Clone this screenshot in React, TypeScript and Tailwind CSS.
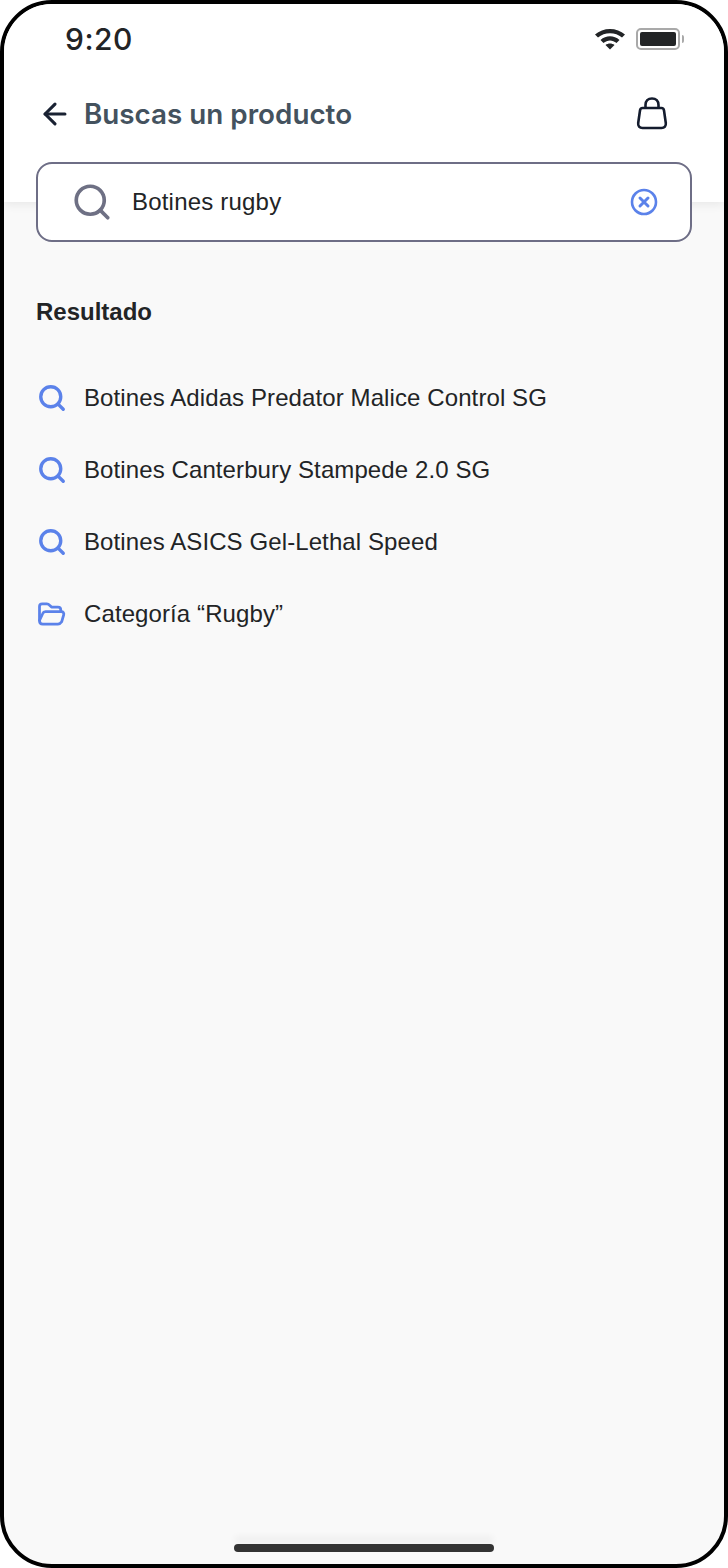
import React from 'react';
import { ArrowLeft, Search } from 'lucide-react';

const results = [
  'Botines Adidas Predator Malice Control SG',
  'Botines Canterbury Stampede 2.0 SG',
  'Botines ASICS Gel-Lethal Speed',
];

function FolderIcon() {
  return (
    <svg width="29" height="24" viewBox="0 0 30 26" fill="none" stroke="#5b82ea" strokeWidth="3" strokeLinejoin="round" strokeLinecap="round">
      <path d="M2 20 V5 C2 3 3 2 5 2 H10 C11.5 2 12.5 3 13.5 4 L15 5.5 H22 C24 5.5 25 6.5 25 8.5 V10" />
      <path d="M2 20 C2 22.5 3.5 24 5.5 24 H22 C24 24 25 23 26 21.5 L28.2 14 C28.8 12 27.5 10.5 25.8 10.5 H8.5 C7 10.5 6 11.2 5.5 12.5 Z" />
    </svg>
  );
}

function ResultRow({ label, folder }: { label: string; folder?: boolean }) {
  return (
    <div className="flex h-[72px] items-center">
      <div className="flex w-[48px] shrink-0 items-center">
        {folder ? (
          <div className="ml-[1px]">
            <FolderIcon />
          </div>
        ) : (
          <Search size={30} strokeWidth={2.7} className="ml-[1px] text-[#5b82ea]" />
        )}
      </div>
      <span className="text-[24px] leading-[32px] tracking-[0.1px] text-[#222426]">{label}</span>
    </div>
  );
}

export default function App() {
  return (
    <div className="bg-white font-['Liberation_Sans',Arial,sans-serif]">
      <div className="flex h-[1568px] w-[728px] flex-col overflow-hidden rounded-[52px] border-4 border-black bg-[#f9f9f9]">
        {/* Header */}
        <div className="h-[198px] shrink-0 bg-white shadow-[0_2px_10px_rgba(0,0,0,0.08)]">
          <div className="flex h-[80px] items-start justify-between pl-[61px] pr-[44px] pt-[16px]">
            <span className="font-['Inter',sans-serif] text-[30px] font-medium leading-[38px] tracking-[0.5px] text-[#222426]">9:20</span>
            <div className="flex items-center gap-[10px] pt-[7px]">
              <svg width="32" height="24" viewBox="0 0 32 24" fill="#222426" className="-mt-[1px]">
                <path d="M1 8.5 C9 1 23 1 31 8.5 L28 11.5 C21.5 5.8 10.5 5.8 4 11.5 Z" />
                <path d="M6.5 14 C12 9 20 9 25.5 14 L22.5 17 C18.5 13.6 13.5 13.6 9.5 17 Z" />
                <path d="M11.5 19 C14 17 18 17 20.5 19 L16 23.5 Z" />
              </svg>
              <div className="relative flex h-[22px] w-[44px] items-center rounded-[5px] border-2 border-[#a9a9a9] p-[2px]">
                <div className="h-full w-full rounded-[2px] bg-[#222426]" />
                <div className="absolute right-[-6px] top-[5px] h-[8px] w-[2px] rounded-r-sm bg-[#a9a9a9]" />
              </div>
            </div>
          </div>
          <div className="flex h-[60px] items-center justify-between pl-[34px] pr-[56px]">
            <div className="flex items-center gap-[12px]">
              <ArrowLeft size={34} strokeWidth={2.2} className="text-[#1a2233]" />
              <span className="font-['Inter',sans-serif] text-[27.8px] font-semibold leading-[36px] text-[#44525e]">Buscas un producto</span>
            </div>
            <svg width="32" height="34" viewBox="0 0 32 34" fill="none" stroke="#141c2e" strokeWidth="2.6" strokeLinejoin="round" className="-mt-[3px]">
              <path d="M6.5 12 H25.5 C27 12 27.8 13 28 14.5 L29.8 27 C30.2 30 28.5 32 25.5 32 H6.5 C3.5 32 1.8 30 2.2 27 L4 14.5 C4.2 13 5 12 6.5 12 Z" />
              <path d="M9.5 12 V9 C9.5 5 12 2.5 16 2.5 C20 2.5 22.5 5 22.5 9 V12" />
            </svg>
          </div>
        </div>

        {/* Search box */}
        <div className="relative mx-[32px] -mt-[40px] flex h-[80px] shrink-0 items-center rounded-[16px] border-2 border-[#6e6e86] bg-white pl-[33px] pr-[32px]">
          <Search size={42} strokeWidth={2.1} className="mr-[19px] shrink-0 text-[#6e7084]" />
          <span className="flex-1 text-[24px] leading-[32px] tracking-[0.2px] text-[#222426]">Botines rugby</span>
          <svg width="28" height="28" viewBox="0 0 28 28" fill="none" stroke="#5b82ea" strokeWidth="2.6" strokeLinecap="round">
            <circle cx="14" cy="14" r="12" />
            <path d="M10 10 L18 18 M18 10 L10 18" strokeWidth="3" />
          </svg>
        </div>

        {/* Results */}
        <div className="flex flex-1 flex-col px-[32px] pt-[54px]">
          <h2 className="mb-[34px] text-[24px] font-bold leading-[32px] text-[#222426]">Resultado</h2>
          {results.map((label) => (
            <ResultRow key={label} label={label} />
          ))}
          <ResultRow label="Categoría “Rugby”" folder />
        </div>

        {/* Home indicator */}
        <div className="flex h-[20px] shrink-0 justify-center">
          <div className="h-[8px] w-[260px] rounded-full bg-[#333333] shadow-[0_-8px_6px_rgba(0,0,0,0.04)]" />
        </div>
      </div>
    </div>
  );
}
